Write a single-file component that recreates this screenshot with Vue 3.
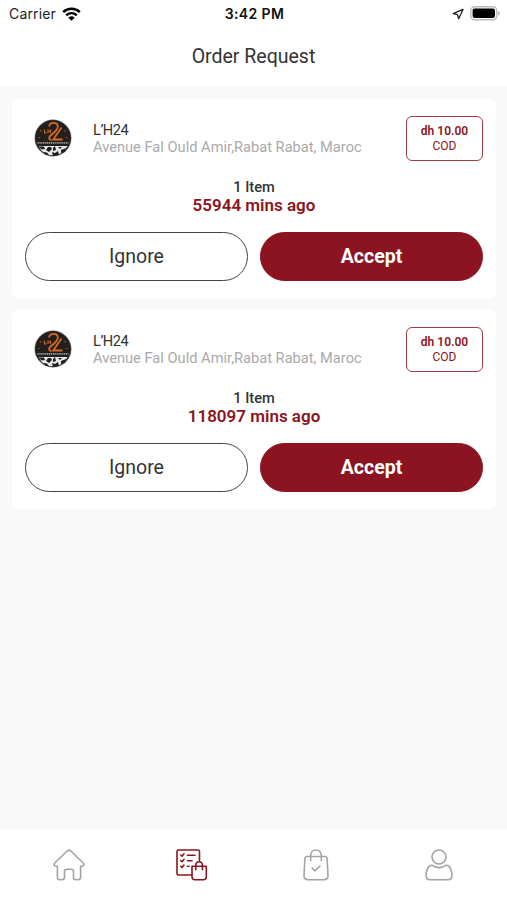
<template>
  <main class="screen">
    <div class="status-bar">
      <div class="carrier">
        <span>Carrier</span>
        <svg width="19" height="14" viewBox="0 0 19 14">
          <path d="M1.2 5.1a12 12 0 0 1 16.6 0" fill="none" stroke="#000" stroke-width="2.6" />
          <path d="M4.2 8.3a7.6 7.6 0 0 1 10.6 0" fill="none" stroke="#000" stroke-width="2.4" />
          <path d="M9.5 13.8 6.3 10.8a4.8 4.8 0 0 1 6.4 0z" />
        </svg>
      </div>
      <span class="time">3:42 PM</span>
      <div class="indicators">
        <svg width="12" height="12" viewBox="0 0 12 12">
          <path d="M11 1.4 1.2 5.6l4.3 1.1 1.2 4z" fill="none" stroke="#222" stroke-width="1.3" stroke-linejoin="round" />
        </svg>
        <svg width="30" height="15" viewBox="0 0 30 15">
          <rect x=".8" y=".8" width="26" height="13" rx="3.8" fill="#fff" stroke="#bbb" stroke-width="1.4" />
          <rect x="2.6" y="2.6" width="22.4" height="9.4" rx="2" />
          <path d="M28.2 5v4.6c2-.8 2-3.8 0-4.6z" fill="#aaa" />
        </svg>
      </div>
    </div>

    <header>
      <h1>Order Request</h1>
    </header>

    <section class="orders">
      <article v-for="order in orders" :key="order.id" class="card">
        <div class="card-top">
          <svg class="logo" width="38" height="38" viewBox="0 0 38 38">
            <circle cx="19" cy="19" r="18.2" fill="#22201f" stroke="#777" stroke-width=".5" />
            <path d="M4.5 27h29l-2.8 4.6c-5.5 6-17.5 6.5-23.4 0z" fill="#e8e8e8" />
            <path d="M4 27.5h6l1 2.5-3 .5zM12 31l2-3h3l1 2-3 3zM19 29l2-2 1 4-3 1zM24 28h4l-2 2zM27 31l5-2-1 4-4 1zM9 33l4 .5 2 3-4-1zM18 33l3 1 3-2 1 4-6 1z" fill="#22201f" />
            <path d="M3.5 23.8h31" stroke="#999" stroke-width="1.7" stroke-dasharray="1.3 .6" />
            <path d="M15 7.5c1-4.8 8.8-4.8 8.8.3 0 4-4.8 6-8 9.6-1.5 1.8-.4 3.4 1.6 3.4M27.5 8.5l-8.3 12h9.3" fill="none" stroke="#d96a20" stroke-width="1.8" />
            <path d="M10.5 10.5v3.3h2M14 10.5v3.5m0-2h2.5m0-1.5v3.5" fill="none" stroke="#c8621f" stroke-width="1.2" />
            <path d="M4.5 18.5h1.4M31.8 18.5h1.5M6 11.5l1.4.8M31.8 11.5l-1.4.8" stroke="#b75820" stroke-width="1.2" />
          </svg>
          <div class="shop">
            <p class="name">{{ order.name }}</p>
            <p class="address">{{ order.address }}</p>
          </div>
          <div class="price">
            <strong>{{ order.price }}</strong>
            <span>{{ order.payment }}</span>
          </div>
        </div>
        <p class="items">{{ order.items }}</p>
        <p class="ago">{{ order.minutes }} mins ago</p>
        <div class="actions">
          <button class="ignore">Ignore</button>
          <button class="accept">Accept</button>
        </div>
      </article>
    </section>

    <nav>
      <a>
        <svg width="32" height="32" viewBox="0 0 32 32">
          <path d="M14.4 1.8Q16 .4 17.6 1.8L30.2 14c1.5 1.6.6 3.2-1.4 3.2h-1.2v10.9q0 2.7-2.7 2.7h-1.8q-2.6 0-2.6-2.7v-5.5q0-2.3-2.3-2.3h-4.4q-2.3 0-2.3 2.3v5.5q0 2.7-2.6 2.7H7.1q-2.7 0-2.7-2.7V17.2H3.2c-2 0-2.9-1.6-1.4-3.2z" />
        </svg>
      </a>
      <a class="active">
        <svg width="32" height="32" viewBox="0 0 32 32">
          <path d="M23.5 11.5V2.5q0-1.5-1.5-1.5H2.5Q1 1 1 2.5v22Q1 26 2.5 26H16" />
          <path d="m4.8 6 1.2 1.2 2-2.4M4.8 11.6l1.2 1.2 2-2.4M4.8 17.2l1.2 1.2 2-2.4M11.5 6.2H19M11.5 11.8h4.5M11.5 17.2h1.5" />
          <path d="M16 17.2h14.3v10.6q0 3-3 3H19q-3 0-3-3zM19.8 20.8v-4.3c0-5 6.6-5 6.6 0v4.3" />
        </svg>
      </a>
      <a>
        <svg width="32" height="32" viewBox="0 0 32 32">
          <path d="M7 7.5h18q2 0 2.1 2l.9 17q.1 4.2-4 4.2H8q-4.1 0-4-4.2l.9-17q.1-2 2.1-2z" />
          <path d="M10.7 11.5V6.3c0-7 10.6-7 10.6 0v5.2M12.2 19l2.7 2.9 5.1-4.9" />
        </svg>
      </a>
      <a>
        <svg width="32" height="32" viewBox="0 0 32 32">
          <circle cx="16" cy="8" r="7" />
          <path d="M8.7 16.3c1.2 0 1.8.6 2.8 1.2q4.5 2.3 9 0c1-.6 1.6-1.2 2.8-1.2 3.8 0 5.6 5.3 5.6 10.2q0 4.2-4 4.2H7.1q-4 0-4-4.2c0-4.9 1.8-10.2 5.6-10.2z" />
        </svg>
      </a>
    </nav>
  </main>
</template>


<script setup>
import { ref } from 'vue';

const orders = ref([
  {
    id: 1,
    name: 'L’H24',
    address: 'Avenue Fal Ould Amir,Rabat Rabat, Maroc',
    price: 'dh 10.00',
    payment: 'COD',
    items: '1 Item',
    minutes: 55944
  },
  {
    id: 2,
    name: 'L’H24',
    address: 'Avenue Fal Ould Amir,Rabat Rabat, Maroc',
    price: 'dh 10.00',
    payment: 'COD',
    items: '1 Item',
    minutes: 118097
  }
]);
</script>


<style>
body {
  background-color: #f9f9f9;
}
</style>

<style scoped>
.screen {
  display: flex;
  flex-direction: column;
  height: 100vh;
  font-family: Roboto, sans-serif;
  color: #333;
}

p,
h1 {
  margin: 0;
}

.status-bar {
  display: grid;
  grid-template-columns: 1fr auto 1fr;
  align-items: center;
  height: 27px;
  padding: 0 7px 0 9px;
  background-color: white;
  font-family: Inter, sans-serif;
  font-size: 14px;
  color: #222;
}

.carrier,
.indicators {
  display: flex;
  align-items: center;
  gap: 6px;
}

.carrier span {
  letter-spacing: 0.15px;
}

.indicators {
  justify-content: flex-end;
}

.time {
  font-weight: 600;
  letter-spacing: 0.4px;
  color: #111;
}

header {
  display: flex;
  box-sizing: border-box;
  align-items: center;
  justify-content: center;
  height: 60px;
  padding-bottom: 2px;
  background-color: white;
}

h1 {
  font-size: 19.5px;
  font-weight: 400;
}

.orders {
  display: flex;
  flex: 1;
  flex-direction: column;
  gap: 12px;
  padding: 12px 11px 12px 12px;
}

.card {
  box-sizing: border-box;
  height: 199px;
  padding: 17px 13px;
  border-radius: 6px;
  background-color: white;
  text-align: center;
}

.card-top {
  display: flex;
  height: 45px;
}

.logo {
  margin: 3px 0 0 9px;
}

.shop {
  flex: 1;
  margin: 6px 0 0 21px;
  text-align: left;
  font-size: 14.65px;
  line-height: 17px;
}

.name {
  letter-spacing: -0.5px;
}

.address {
  color: #aaa;
}

.price {
  display: flex;
  box-sizing: border-box;
  flex-direction: column;
  justify-content: center;
  width: 77px;
  height: 45px;
  border: 1px solid #a33b48;
  border-radius: 6px;
  color: #8c1420;
  font-size: 12px;
  line-height: 15px;
}

.price strong {
  font-weight: 600;
}

.items {
  margin-top: 17px;
  font-size: 14.65px;
  font-weight: 500;
  line-height: 18px;
}

.ago {
  color: #8c1420;
  font-size: 17px;
  font-weight: 600;
  line-height: 19px;
}

.actions {
  display: flex;
  gap: 12px;
  margin-top: 17px;
}

.actions button {
  flex: 1;
  height: 49px;
  padding: 0;
  border: 1px solid #444;
  border-radius: 25px;
  background-color: white;
  color: #333;
  font-family: inherit;
  font-size: 19.5px;
}

.actions .accept {
  border-color: #8c1420;
  background-color: #8c1420;
  color: white;
  font-weight: 700;
}

nav {
  display: flex;
  height: 70px;
  padding: 0 6px 0 7px;
  background-color: white;
}

nav a {
  display: flex;
  flex: 1;
  justify-content: center;
  padding-top: 19px;
}

nav svg {
  fill: none;
  stroke: #a3a3a3;
  stroke-width: 1.6;
  stroke-linecap: round;
  stroke-linejoin: round;
}

nav .active svg {
  stroke: #8c1420;
}
</style>
